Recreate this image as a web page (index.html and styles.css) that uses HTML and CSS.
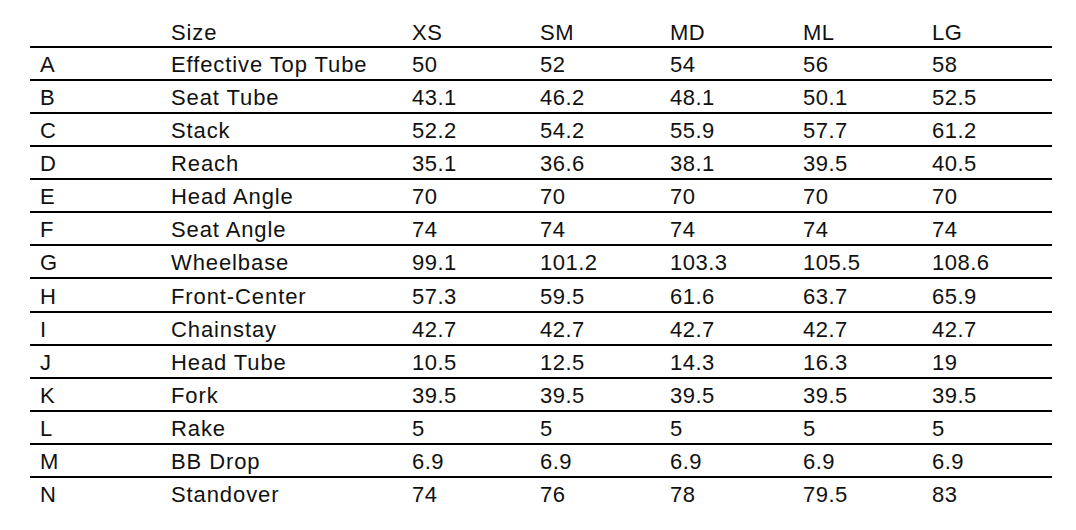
FILE: index.html
```html
<!DOCTYPE html>
<html lang="en">
<head>
<meta charset="utf-8">
<title>Geometry</title>
<link rel="stylesheet" href="styles.css">
</head>
<body>
<div class="geo">
  <div class="row head"><span></span><span>Size</span><span>XS</span><span>SM</span><span>MD</span><span>ML</span><span>LG</span></div>
  <div class="row"><span>A</span><span>Effective Top Tube</span><span>50</span><span>52</span><span>54</span><span>56</span><span>58</span></div>
  <div class="row"><span>B</span><span>Seat Tube</span><span>43.1</span><span>46.2</span><span>48.1</span><span>50.1</span><span>52.5</span></div>
  <div class="row"><span>C</span><span>Stack</span><span>52.2</span><span>54.2</span><span>55.9</span><span>57.7</span><span>61.2</span></div>
  <div class="row"><span>D</span><span>Reach</span><span>35.1</span><span>36.6</span><span>38.1</span><span>39.5</span><span>40.5</span></div>
  <div class="row"><span>E</span><span>Head Angle</span><span>70</span><span>70</span><span>70</span><span>70</span><span>70</span></div>
  <div class="row"><span>F</span><span>Seat Angle</span><span>74</span><span>74</span><span>74</span><span>74</span><span>74</span></div>
  <div class="row"><span>G</span><span>Wheelbase</span><span>99.1</span><span>101.2</span><span>103.3</span><span>105.5</span><span>108.6</span></div>
  <div class="row"><span>H</span><span>Front-Center</span><span>57.3</span><span>59.5</span><span>61.6</span><span>63.7</span><span>65.9</span></div>
  <div class="row"><span>I</span><span>Chainstay</span><span>42.7</span><span>42.7</span><span>42.7</span><span>42.7</span><span>42.7</span></div>
  <div class="row"><span>J</span><span>Head Tube</span><span>10.5</span><span>12.5</span><span>14.3</span><span>16.3</span><span>19</span></div>
  <div class="row"><span>K</span><span>Fork</span><span>39.5</span><span>39.5</span><span>39.5</span><span>39.5</span><span>39.5</span></div>
  <div class="row"><span>L</span><span>Rake</span><span>5</span><span>5</span><span>5</span><span>5</span><span>5</span></div>
  <div class="row"><span>M</span><span>BB Drop</span><span>6.9</span><span>6.9</span><span>6.9</span><span>6.9</span><span>6.9</span></div>
  <div class="row last"><span>N</span><span>Standover</span><span>74</span><span>76</span><span>78</span><span>79.5</span><span>83</span></div>
</div>
</body>
</html>
```
FILE: styles.css
```css
html, body {
  margin: 0;
  padding: 0;
  background: #fff;
}

body {
  font-family: "Liberation Sans", Arial, Helvetica, sans-serif;
  font-size: 22px;
  letter-spacing: 0.5px;
  color: #111;
}

.geo {
  width: 1022px;
  margin-left: 30px;
}

.row {
  display: grid;
  grid-template-columns: 131px 241px 128px 130px 133px 129px 130px;
  align-items: end;
  box-sizing: border-box;
  height: 33.15px;
  border-bottom: 2px solid #000;
  line-height: 22px;
  padding-bottom: 3px;
}

.row span {
  padding-left: 10px;
  white-space: nowrap;
}

.row span:nth-child(2) {
  letter-spacing: 0.9px;
}

.row.head {
  height: 47.5px;
  padding-bottom: 2px;
}

.row.last {
  border-bottom: 0;
  height: 31.15px;
}
```
